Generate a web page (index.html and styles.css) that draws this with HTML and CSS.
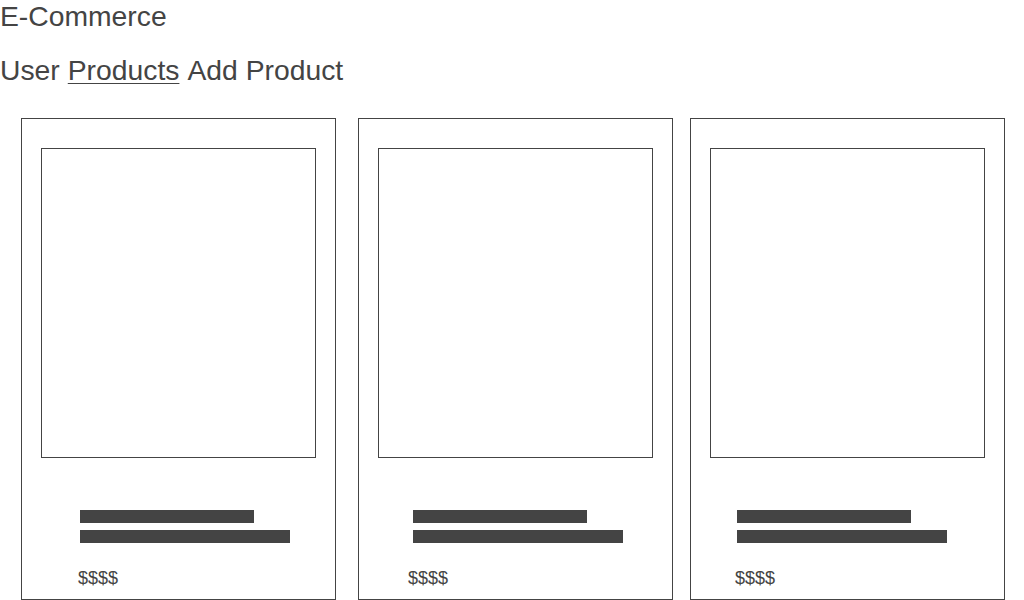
FILE: index.html
```html
<!DOCTYPE html>
<html lang="en">
<head>
<meta charset="UTF-8" />
<meta name="viewport" content="width=device-width, initial-scale=1" />
<title>E-Commerce</title>
<link rel="stylesheet" href="styles.css">
</head>
<body>
  <header class="header">
    <div class="brand">E-Commerce</div>
    <nav class="nav">
      <a class="nav-link" href="#">User</a>
      <a class="nav-link current" href="#">Products</a>
      <a class="nav-link" href="#">Add Product</a>
    </nav>
  </header>

  <main class="products">
    <div class="card card-1">
      <div class="thumb"></div>
      <div class="info">
        <div class="bar short"></div>
        <div class="bar long"></div>
        <div class="price">$$$$</div>
      </div>
    </div>

    <div class="card card-2">
      <div class="thumb"></div>
      <div class="info">
        <div class="bar short"></div>
        <div class="bar long"></div>
        <div class="price">$$$$</div>
      </div>
    </div>

    <div class="card card-3">
      <div class="thumb"></div>
      <div class="info">
        <div class="bar short"></div>
        <div class="bar long"></div>
        <div class="price">$$$$</div>
      </div>
    </div>
  </main>
</body>
</html>
```

FILE: styles.css
```css
body {
  margin: 0;
  background: #fff;
  color: #444;
  font-family: "Liberation Sans", Arial, sans-serif;
  height: 600px;
  overflow: hidden;
}

.brand {
  font-size: 28.3px;
  line-height: 32px;
  height: 32px;
  margin-bottom: 22px;
}

.nav {
  display: flex;
  gap: 8px;
  font-size: 28.3px;
  line-height: 32px;
}

.nav-link {
  color: #444;
  text-decoration: none;
}

.nav-link.current {
  text-decoration: underline;
  text-underline-offset: 3px;
  text-decoration-thickness: 1px;
}

.products {
  display: flex;
  padding-left: 21px;
  margin-top: 32px;
}

.card {
  box-sizing: border-box;
  width: 315px;
  height: 482px;
  border: 1px solid #444;
  padding: 29px 19px 0;
  flex-shrink: 0;
}

.card-2 {
  margin-left: 22px;
}

.card-3 {
  margin-left: 17px;
}

.thumb {
  box-sizing: border-box;
  width: 275px;
  height: 310px;
  border: 1px solid #444;
}

.info {
  padding-top: 52px;
}

.card-1 .info { padding-left: 39px; }
.card-2 .info { padding-left: 35px; }
.card-3 .info { padding-left: 27px; }

.bar {
  height: 13px;
  background: #444;
  margin-bottom: 7px;
}

.bar.short { width: 174px; }
.bar.long { width: 210px; }

.price {
  font-size: 18px;
  line-height: 20px;
  margin-top: 25px;
  margin-left: -2px;
}

.card-2 .price { margin-left: -5px; }
.card-3 .price { margin-left: -2px; }
```
